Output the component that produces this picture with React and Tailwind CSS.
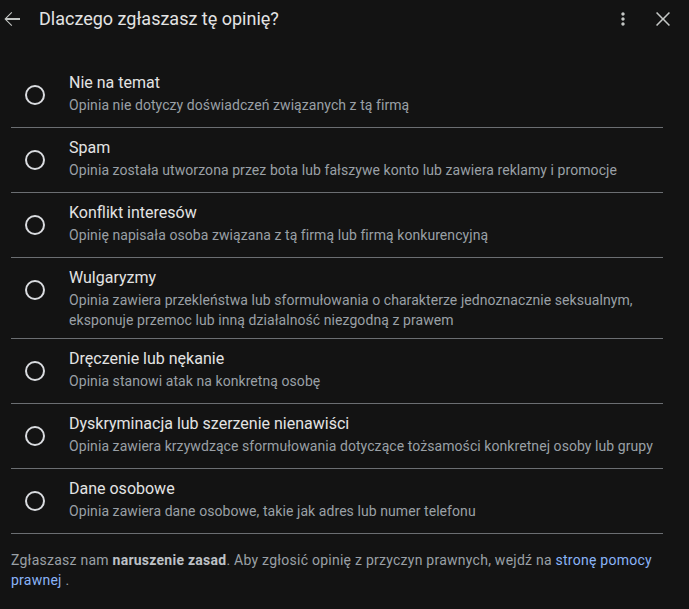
const reasons = [
  {
    title: "Nie na temat",
    desc: "Opinia nie dotyczy doświadczeń związanych z tą firmą",
  },
  {
    title: "Spam",
    desc: "Opinia została utworzona przez bota lub fałszywe konto lub zawiera reklamy i promocje",
  },
  {
    title: "Konflikt interesów",
    desc: "Opinię napisała osoba związana z tą firmą lub firmą konkurencyjną",
  },
  {
    title: "Wulgaryzmy",
    desc: "Opinia zawiera przekleństwa lub sformułowania o charakterze jednoznacznie seksualnym, eksponuje przemoc lub inną działalność niezgodną z prawem",
  },
  {
    title: "Dręczenie lub nękanie",
    desc: "Opinia stanowi atak na konkretną osobę",
  },
  {
    title: "Dyskryminacja lub szerzenie nienawiści",
    desc: "Opinia zawiera krzywdzące sformułowania dotyczące tożsamości konkretnej osoby lub grupy",
  },
  {
    title: "Dane osobowe",
    desc: "Opinia zawiera dane osobowe, takie jak adres lub numer telefonu",
  },
];

function BackIcon() {
  return (
    <svg width="24" height="24" viewBox="0 0 24 24" fill="#c4c7c5">
      <path d="M20 11.1H6.9l5.3-5.3L11.4 5l-7 7 7 7 .8-.8-5.3-5.3H20v-1.8z" />
    </svg>
  );
}

function MoreIcon() {
  return (
    <svg width="20" height="20" viewBox="0 0 24 24" fill="#c4c7c5">
      <path d="M12 8c1.1 0 2-.9 2-2s-.9-2-2-2-2 .9-2 2 .9 2 2 2zm0 2c-1.1 0-2 .9-2 2s.9 2 2 2 2-.9 2-2-.9-2-2-2zm0 6c-1.1 0-2 .9-2 2s.9 2 2 2 2-.9 2-2-.9-2-2-2z" />
    </svg>
  );
}

function CloseIcon() {
  return (
    <svg width="24" height="24" viewBox="0 0 24 24" fill="#c4c7c5">
      <path d="M19 6.1L17.9 5 12 10.9 6.1 5 5 6.1 10.9 12 5 17.9 6.1 19 12 13.1 17.9 19 19 17.9 13.1 12z" />
    </svg>
  );
}

export default function App() {
  return (
    <div
      className="w-[689px] h-[609px] bg-[#131313] text-[#e3e3e3] overflow-hidden"
      style={{ fontFamily: "Roboto, 'Noto Sans', sans-serif" }}
    >
      <div className="flex items-center h-[38px] pr-[14px]">
        <BackIcon />
        <p className="ml-[15px] text-[18px] leading-6 text-[#e3e3e3]">
          Dlaczego zgłaszasz tę opinię?
        </p>
        <div className="flex-1" />
        <div className="flex items-center gap-[18px]">
          <MoreIcon />
          <CloseIcon />
        </div>
      </div>

      <div className="mt-[25px] mx-[11px] w-[652px]">
        {reasons.map((r) => (
          <div
            key={r.title}
            className="flex items-start min-h-[65px] pt-[10px] pb-[8px] border-b border-[#6b6e72]"
          >
            <div className="w-[48px] h-[20px] mt-[12px] flex justify-center">
              <div className="w-[20px] h-[20px] rounded-full border-2 border-[#dadce0]" />
            </div>
            <div className="ml-[10px] flex-1">
              <p className="text-[16px] leading-5 text-[#e3e3e3]">{r.title}</p>
              <p className="mt-[2px] text-[14px] leading-5 tracking-[0.07px] text-[#9aa0a6]">
                {r.desc}
              </p>
            </div>
          </div>
        ))}

        <p className="mt-[16px] text-[14px] leading-5 tracking-[0.25px] text-[#9aa0a6]">
          Zgłaszasz nam{" "}
          <span className="font-bold text-[#bdc1c6]">naruszenie zasad</span>. Aby
          zgłosić opinię z przyczyn prawnych, wejdź na{" "}
          <span className="text-[#8ab4f8]">stronę pomocy prawnej</span> .
        </p>
      </div>
    </div>
  );
}
